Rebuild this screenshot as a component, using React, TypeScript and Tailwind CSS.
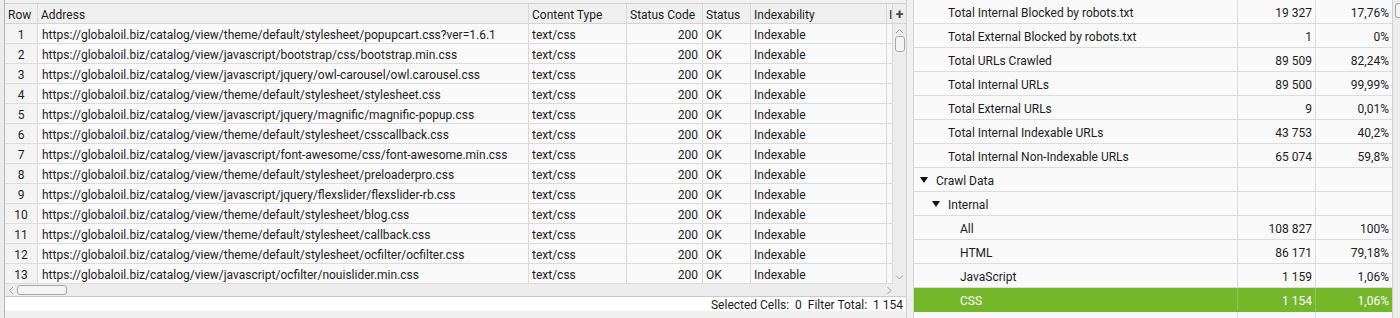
import React from 'react';

const base = 'https://globaloil.biz/catalog/view/';

const urls = [
  'theme/default/stylesheet/popupcart.css?ver=1.6.1',
  'javascript/bootstrap/css/bootstrap.min.css',
  'javascript/jquery/owl-carousel/owl.carousel.css',
  'theme/default/stylesheet/stylesheet.css',
  'javascript/jquery/magnific/magnific-popup.css',
  'theme/default/stylesheet/csscallback.css',
  'javascript/font-awesome/css/font-awesome.min.css',
  'theme/default/stylesheet/preloaderpro.css',
  'javascript/jquery/flexslider/flexslider-rb.css',
  'theme/default/stylesheet/blog.css',
  'theme/default/stylesheet/callback.css',
  'theme/default/stylesheet/ocfilter/ocfilter.css',
  'javascript/ocfilter/nouislider.min.css',
];

type Overview = { label: string; pad: string; toggle?: boolean; count?: string; pct?: string; active?: boolean };

const overview: Overview[] = [
  { label: 'Total Internal Blocked by robots.txt', pad: 'pl-[34px]', count: '19 327', pct: '17,76%' },
  { label: 'Total External Blocked by robots.txt', pad: 'pl-[34px]', count: '1', pct: '0%' },
  { label: 'Total URLs Crawled', pad: 'pl-[34px]', count: '89 509', pct: '82,24%' },
  { label: 'Total Internal URLs', pad: 'pl-[34px]', count: '89 500', pct: '99,99%' },
  { label: 'Total External URLs', pad: 'pl-[34px]', count: '9', pct: '0,01%' },
  { label: 'Total Internal Indexable URLs', pad: 'pl-[34px]', count: '43 753', pct: '40,2%' },
  { label: 'Total Internal Non-Indexable URLs', pad: 'pl-[34px]', count: '65 074', pct: '59,8%' },
  { label: 'Crawl Data', pad: 'pl-[6px]', toggle: true },
  { label: 'Internal', pad: 'pl-[18px]', toggle: true },
  { label: 'All', pad: 'pl-[46px]', count: '108 827', pct: '100%' },
  { label: 'HTML', pad: 'pl-[46px]', count: '86 171', pct: '79,18%' },
  { label: 'JavaScript', pad: 'pl-[46px]', count: '1 159', pct: '1,06%' },
  { label: 'CSS', pad: 'pl-[46px]', count: '1 154', pct: '1,06%', active: true },
];

const Triangle = () => (
  <svg width="8" height="6" viewBox="0 0 8 6" className="mr-[8px] shrink-0 -mt-[2px]">
    <polygon points="0,0 8,0 4,6" fill="#111" />
  </svg>
);

const Chevron = ({ dir }: { dir: 'up' | 'down' | 'left' | 'right' }) => {
  const pts = {
    up: '1,5 4.5,1.5 8,5',
    down: '1,1.5 4.5,5 8,1.5',
    left: '5,1 1.5,4.5 5,8',
    right: '1.5,1 5,4.5 1.5,8',
  }[dir];
  const w = dir === 'up' || dir === 'down' ? 9 : 7;
  const h = dir === 'up' || dir === 'down' ? 7 : 9;
  return (
    <svg width={w} height={h} viewBox={`0 0 ${w} ${h}`}>
      <polyline points={pts} fill="none" stroke="#a0a0a0" strokeWidth="1" />
    </svg>
  );
};

const cell = 'h-full shrink-0 flex items-center pt-[2px] border-r border-[#d9d9d9] overflow-hidden whitespace-nowrap';

const App: React.FC = () => {
  return (
    <div className="w-[1400px] h-[318px] flex bg-[#f0f0f0] overflow-hidden text-[12px] text-[#1c1c1c] font-['Roboto','Noto_Sans',sans-serif] leading-none">
      {/* panel behind, cut off */}
      <div className="w-[5px] h-full shrink-0 border-r border-[#b5b5b5] bg-[#ececec]"></div>

      {/* results table */}
      <div className="w-[902px] h-full shrink-0 flex flex-col border-r border-[#d0d0d0]">
        <div className="h-[3px]"></div>
        <div className="border-t border-[#cfcfcf] bg-[#f9f9f9]">
          <div className="flex h-[20px] bg-[#efefef] border-b border-[#d4d4d4]">
            <div className={`${cell} w-[33px] pl-[3px]`}>Row</div>
            <div className={`${cell} w-[491px] pl-[3px]`}>Address</div>
            <div className={`${cell} w-[98px] pl-[3px]`}>Content Type</div>
            <div className={`${cell} w-[76px] pl-[3px]`}>Status Code</div>
            <div className={`${cell} w-[48px] pl-[3px]`}>Status</div>
            <div className={`${cell} w-[136px] pl-[3px]`}>Indexability</div>
            <div className={`${cell} w-[6px] pl-[2px]`}>I</div>
            <div className="w-[13px] h-full shrink-0 flex items-center justify-center bg-[#ececec] text-[14px] font-bold text-[#444]">+</div>
          </div>
          <div className="flex">
            <div className="w-[888px] shrink-0">
              {urls.map((u, i) => (
                <div key={i} className="flex h-[20px] border-b border-[#dcdcdc]">
                  <div className={`${cell} w-[33px] justify-center bg-[#f3f3f3]`}>{i + 1}</div>
                  <div className={`${cell} w-[491px] pl-[4px]`}>{base + u}</div>
                  <div className={`${cell} w-[98px] pl-[3px]`}>text/css</div>
                  <div className={`${cell} w-[76px] justify-end pr-[4px]`}>200</div>
                  <div className={`${cell} w-[48px] pl-[3px]`}>OK</div>
                  <div className={`${cell} w-[136px] pl-[3px]`}>Indexable</div>
                  <div className={`${cell} w-[6px]`}></div>
                </div>
              ))}
            </div>
            <div className="w-[13px] h-[260px] shrink-0 bg-[#ececec] flex flex-col items-center">
              <div className="mt-[4px]"><Chevron dir="up" /></div>
              <div className="mt-[1px] w-[10px] h-[16px] rounded-[3px] border border-[#a8a8a8] bg-[#f4f4f4]"></div>
              <div className="flex-1"></div>
              <div className="mb-[3px]"><Chevron dir="down" /></div>
            </div>
          </div>
          <div className="flex items-center h-[13px] bg-[#ececec] border-b border-[#c9c9c9]">
            <div className="ml-[3px]"><Chevron dir="left" /></div>
            <div className="ml-[2px] w-[50px] h-[10px] rounded-[3px] border border-[#a8a8a8] bg-[#f4f4f4]"></div>
            <div className="flex-1"></div>
            <div className="mr-[13px]"><Chevron dir="right" /></div>
          </div>
        </div>
        <div className="h-[14px] bg-white flex items-center pt-[1px] justify-end pr-[3px] whitespace-pre">
          {'Selected Cells:  0  Filter Total:  1 154'}
        </div>
        <div className="flex-1"></div>
      </div>

      <div className="w-[6px] shrink-0"></div>

      {/* overview tree */}
      <div className="w-[487px] shrink-0 h-full flex border-l border-[#d4d4d4]">
        <div className="w-[478px] shrink-0 h-full bg-[#f9f9f9]">
          {overview.map((r, i) => (
            <div
              key={i}
              className={`flex h-[24px] border-b ${r.active ? 'bg-[#74b72b] text-white border-[#74b72b]' : 'border-[#dcdcdc]'}`}
            >
              <div className={`w-[324px] h-full flex items-center pt-[2px] whitespace-nowrap border-r ${r.active ? 'border-[#8fc653]' : 'border-[#dcdcdc]'} ${r.pad}`}>
                {r.toggle && <Triangle />}
                <span>{r.label}</span>
              </div>
              <div className={`w-[78px] h-full flex items-center pt-[2px] justify-end pr-[3px] border-r ${r.active ? 'border-[#8fc653]' : 'border-[#dcdcdc]'}`}>{r.count}</div>
              <div className="w-[76px] h-full flex items-center pt-[2px] justify-end pr-[3px]">{r.pct}</div>
            </div>
          ))}
          <div className="flex h-[24px]">
            <div className="w-[324px] h-full border-r border-[#dcdcdc]"></div>
            <div className="w-[78px] h-full border-r border-[#dcdcdc]"></div>
          </div>
        </div>
        <div className="w-[8px] shrink-0 h-full overflow-hidden bg-[#ececec] border-l border-[#d0d0d0] pl-[2px] pt-[3px]">
          <div className="w-[6px] h-[15px] rounded-l-[3px] border border-r-0 border-[#a8a8a8] bg-[#f4f4f4]"></div>
        </div>
      </div>
    </div>
  );
};

export default App;
